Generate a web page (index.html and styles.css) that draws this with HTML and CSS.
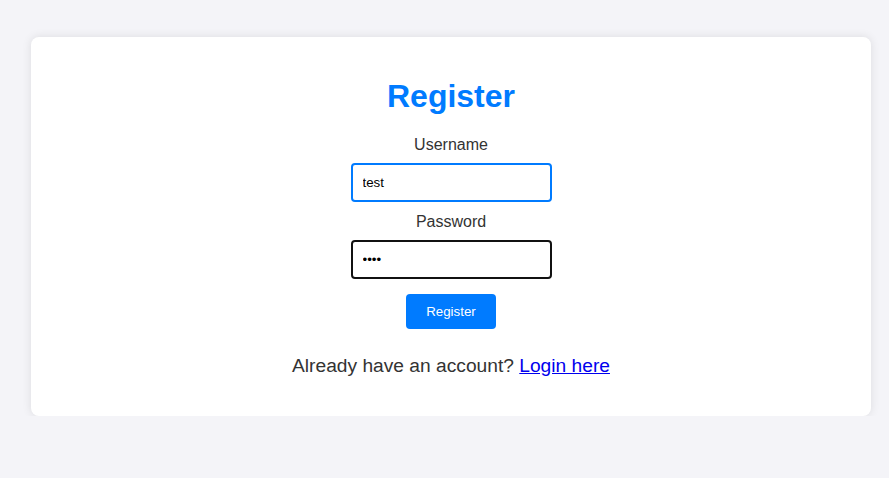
FILE: index.html
```html
<!DOCTYPE html>
<html>
<head>
<meta charset="utf-8">
<link rel="stylesheet" href="styles.css">
</head>
<body>
<div class="page">
  <div class="card">
    <h2 class="title">Register</h2>
    <form class="form">
      <label class="label" for="username">Username</label>
      <input class="input" id="username" type="text" value="test">
      <label class="label" for="password">Password</label>
      <input class="input input-active" id="password" type="password" value="test" autofocus>
      <button class="btn" type="button">Register</button>
    </form>
    <p class="note">Already have an account? <a class="link" href="#">Login here</a></p>
  </div>
</div>
</body>
</html>
```
FILE: styles.css
```css
html, body {
  margin: 0;
  padding: 0;
}
body {
  background: #f4f4f8;
  font-family: "Liberation Sans", Arial, sans-serif;
  color: #333;
}
.page {
  padding: 37px 18px 0 31px;
}
.card {
  background: #fff;
  border-radius: 8px;
  box-shadow: 0 0 10px rgba(0, 0, 0, 0.1);
  padding: 41px 20px 39px;
  display: flex;
  flex-direction: column;
  align-items: center;
}
.title {
  margin: 0;
  font-size: 32px;
  line-height: 37px;
  font-weight: bold;
  color: #007bff;
}
.form {
  display: flex;
  flex-direction: column;
  align-items: center;
  margin-top: 21px;
}
.label {
  font-size: 16px;
  line-height: 18px;
  color: #333;
}
.input {
  box-sizing: border-box;
  width: 201px;
  height: 39px;
  margin: 9px 0 11px;
  padding: 0 10px;
  border: 2px solid #007bff;
  border-radius: 4px;
  font-family: "Liberation Sans", Arial, sans-serif;
  font-size: 13.333px;
  color: #000;
  outline: none;
}
.input-active {
  border-color: #111;
}
.input:last-of-type {
  margin-bottom: 15px;
}
.btn {
  width: 90px;
  height: 35px;
  padding: 0;
  border: none;
  border-radius: 4px;
  background: #007bff;
  color: #fff;
  font-family: "Liberation Sans", Arial, sans-serif;
  font-size: 13.333px;
}
.note {
  margin: 26px 0 0;
  font-size: 19.2px;
  line-height: 22px;
  color: #333;
}
.link {
  color: #0000ee;
  text-decoration: underline;
}
```
